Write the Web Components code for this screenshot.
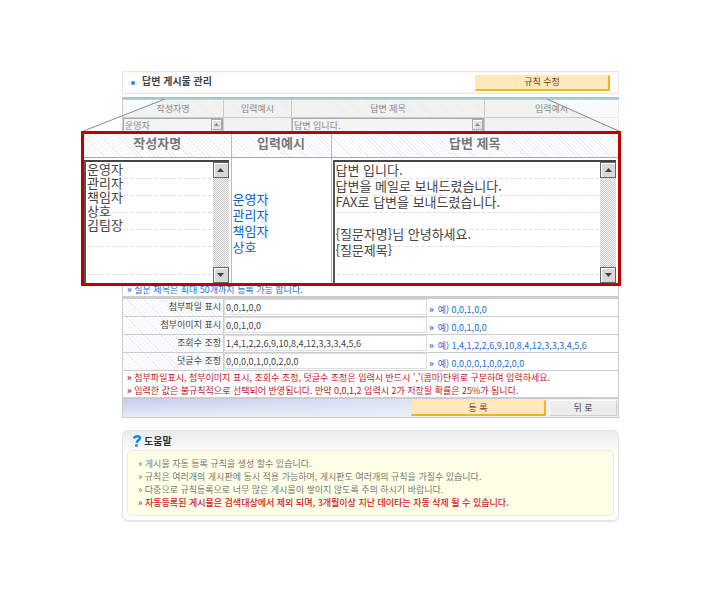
<!DOCTYPE html>
<html lang="ko">
<head>
<meta charset="utf-8">
<title>답변 게시물 관리</title>
<style>
  body {
    margin: 0;
    padding: 71px 104px 78px 122px;
    background: #fff;
    font-family: "Noto Sans CJK KR", "Liberation Sans", sans-serif;
    font-size: 9px;
    line-height: 13px;
    color: #555;
  }
</style>
</head>
<body>
<rule-page></rule-page>

<script>
const HATCH = "repeating-linear-gradient(45deg, #fff 0, #fff 2px, #eaf0f4 2px, #eaf0f4 3px)";

class PageTitle extends HTMLElement {
  constructor() {
    super();
    this.attachShadow({ mode: "open" });
  }

  connectedCallback() {
    this.shadowRoot.innerHTML = `
      <style>
        :host {
          display: flex;
          align-items: center;
          justify-content: space-between;
          height: 21px;
          padding: 0 8px;
          border: 1px solid #e8e8e8;
          background: linear-gradient(#fafafa, #fff 30%, #fff 75%, #f8f8f8);
        }
        h1 {
          display: flex;
          align-items: center;
          gap: 7px;
          margin: 0;
          padding-bottom: 3px;
          font-size: 10px;
          line-height: 18px;
          color: #444;
        }
        h1::before {
          content: "";
          width: 4px;
          height: 4px;
          margin-top: 3px;
          border-radius: 50%;
          background: #1c8fe0;
        }
      </style>
      <h1><slot></slot></h1>
      <slot name="action"></slot>
    `;
  }
}

class ActionButton extends HTMLElement {
  constructor() {
    super();
    this.attachShadow({ mode: "open" });
  }

  connectedCallback() {
    this.shadowRoot.innerHTML = `
      <style>
        :host { display: block; width: 135px; }
        :host([plain]) { width: 68px; }
        button {
          display: block;
          box-sizing: border-box;
          width: 100%;
          height: 16px;
          padding: 0;
          border: 1px solid #ffe6b0;
          border-right: 2px solid #f3b21f;
          border-bottom: 2px solid #f3b21f;
          background: #ffe8bb;
          font: 9px/12px "Noto Sans CJK KR", sans-serif;
          color: #7b3b12;
        }
        :host([plain]) button {
          border-color: #fff #cfcfcf #cfcfcf #fff;
          border-width: 1px;
          background: #ededed;
          color: #444;
        }
      </style>
      <button type="button"><slot></slot></button>
    `;
  }
}

// Multi-line box with the old grey scroll bar at its right
class ScrollBox extends HTMLElement {
  constructor() {
    super();
    this.attachShadow({ mode: "open" });
  }

  connectedCallback() {
    const label = this.getAttribute("label");
    const text = this.getAttribute("text");

    this.shadowRoot.innerHTML = `
      <style>
        :host {
          --bar: 16px;
          display: flex;
          box-sizing: border-box;
          height: 123px;
          border-top: 2px solid #444;
          border-left: 2px solid #555;
          background: #fff;
          font-size: 13px;
          line-height: 16px;
        }
        :host([tight]) { line-height: 14px; }
        :host([small]) {
          --bar: 11px;
          height: 100%;
          border: 1px solid #aaa;
          background: #f4f4f4;
          font-size: 9px;
          line-height: 13px;
        }
        textarea {
          flex: 1;
          min-width: 0;
          box-sizing: border-box;
          padding: 0 1px;
          border: 0;
          resize: none;
          overflow: hidden;
          background:
            repeating-linear-gradient(90deg, #fff 0, #fff 2px, transparent 2px, transparent 6px),
            linear-gradient(#e2e2e2, #e2e2e2) 0 112px / 100% 1px no-repeat,
            repeating-linear-gradient(#fff 0, #fff 16px, #e2e2e2 16px, #e2e2e2 17px) 0 0 / 100% 85px no-repeat;
          font: inherit;
          color: #444;
        }
        :host([small]) textarea { background: none; color: #888; }
        .bar {
          display: flex;
          flex-direction: column;
          justify-content: space-between;
          width: var(--bar);
          background: repeating-conic-gradient(#ccc 0 25%, #f4f4f4 0 50%) 0 0 / 2px 2px;
        }
        button {
          display: flex;
          align-items: center;
          justify-content: center;
          box-sizing: border-box;
          width: var(--bar);
          height: var(--bar);
          padding: 0;
          border: 1px solid #666;
          background: #d8d8d8;
          box-shadow: inset 1px 1px #fff;
        }
        svg { width: 7px; height: 4px; fill: #444; }
        :host([small]) button { border-color: #aaa; background: #e2e2e2; }
        :host([small]) svg { width: 5px; height: 3px; fill: #888; }
      </style>
      <textarea aria-label="${label}">${text}</textarea>
      <div class="bar">
        <button type="button" aria-label="위로"><svg viewBox="0 0 7 4"><path d="M0 4 3.5 0 7 4z"/></svg></button>
        <button type="button" aria-label="아래로"><svg viewBox="0 0 7 4"><path d="M0 0 3.5 4 7 0z"/></svg></button>
      </div>
    `;
  }
}

// The sender / title table, greyed behind the enlarged view
class SourceTable extends HTMLElement {
  constructor() {
    super();
    this.attachShadow({ mode: "open" });
  }

  connectedCallback() {
    this.shadowRoot.innerHTML = `
      <style>
        :host {
          display: block;
          margin-top: 3px;
          border-top: 2px solid #9cc9d2;
        }
        table {
          width: 100%;
          border-collapse: collapse;
          table-layout: fixed;
          background: #f1f1f1;
        }
        th, td {
          box-sizing: border-box;
          padding: 0;
          border: 1px solid #ccc;
        }
        th {
          height: 18px;
          background: repeating-linear-gradient(45deg, #f4f4f4 0, #f4f4f4 2px, #eaecee 2px, #eaecee 3px);
          font-weight: 400;
          color: #888;
        }
        td { height: 165px; }
        td > * { height: 164px; }
        .name { width: 101px; }
        .sample { width: 68px; }
        .subject { width: 193px; }
        p {
          margin: 0;
          padding: 0 4px;
          border: 1px solid #ccc;
          border-top: 0;
          color: #1a6fd0;
        }
      </style>
      <table>
        <tr>
          <th class="name">작성자명</th><th class="sample">입력예시</th>
          <th class="subject">답변 제목</th><th>입력예서</th>
        </tr>
        <tr>
          <td><scroll-box small label="작성자명" text="운영자"></scroll-box></td>
          <td></td>
          <td><scroll-box small label="답변 제목" text="답변 입니다."></scroll-box></td>
          <td></td>
        </tr>
      </table>
      <p><b>»</b> 질문 제목은 최대 50개까지 등록 가능 합니다.</p>
    `;
  }
}

class ZoomPanel extends HTMLElement {
  constructor() {
    super();
    this.attachShadow({ mode: "open" });
  }

  connectedCallback() {
    this.shadowRoot.innerHTML = `
      <style>
        :host {
          display: block;
          border: 3px solid #c00000;
          background: #fff;
          font-size: 13px;
          line-height: 16px;
        }
        table {
          width: 100%;
          border-collapse: collapse;
          table-layout: fixed;
        }
        th, td { padding: 0; border-left: 1px solid #bbb; }
        th:first-child, td:first-child { border-left: 0; }
        th {
          height: 23px;
          padding-bottom: 4px;
          box-sizing: border-box;
          border-bottom: 1px solid #aaa;
          background: ${HATCH};
          color: #777;
        }
        td { padding: 2px 2px 0 1px; }
        td:first-child { padding-left: 0; }
        .name { width: 147px; }
        .sample { width: 100px; }
        p {
          margin: 0;
          padding-top: 3px;
          white-space: pre-line;
          color: #0a62c4;
        }
      </style>
      <table>
        <tr><th class="name">작성자명</th><th class="sample">입력예시</th><th>답변 제목</th></tr>
        <tr>
          <td><scroll-box tight label="작성자명" text="운영자&#10;관리자&#10;책임자&#10;상호&#10;김팀장"></scroll-box></td>
          <td><p>운영자&#10;관리자&#10;책임자&#10;상호</p></td>
          <td><scroll-box label="답변 제목" text="답변 입니다.&#10;답변을 메일로 보내드렸습니다.&#10;FAX로 답변을 보내드렸습니다.&#10;&#10;{질문자명}님 안녕하세요.&#10;{질문제목}"></scroll-box></td>
        </tr>
      </table>
    `;
  }
}

class RuleField extends HTMLElement {
  constructor() {
    super();
    this.attachShadow({ mode: "open" });
  }

  connectedCallback() {
    const label = this.getAttribute("label");
    const value = this.getAttribute("value");

    this.shadowRoot.innerHTML = `
      <style>
        :host {
          display: grid;
          grid-template-columns: 101px 203px 1fr;
          height: 17px;
          border-bottom: 1px solid #ccc;
        }
        label {
          padding-right: 2px;
          border-right: 1px solid #ccc;
          background: ${HATCH};
          line-height: 16px;
          text-align: right;
          color: #444;
        }
        input {
          box-sizing: border-box;
          width: 100%;
          height: 16px;
          padding: 0 1px;
          border: 1px solid #ddd;
          background: #fff;
          font: inherit;
          color: #444;
        }
        span {
          padding: 4px 0 0 2px;
          color: #1a6fd0;
        }
        b { margin-right: 4px; }
      </style>
      <label for="value">${label}</label>
      <input id="value" type="text" value="${value}">
      <span><b>»</b>예) ${value}</span>
    `;
  }
}

class HelpBox extends HTMLElement {
  constructor() {
    super();
    this.attachShadow({ mode: "open" });
  }

  connectedCallback() {
    this.shadowRoot.innerHTML = `
      <style>
        :host {
          display: block;
          margin-top: 12px;
          padding: 0 4px 4px;
          border: 1px solid #e2e2e2;
          border-bottom: 2px solid #e6e6e6;
          border-radius: 6px;
          background: linear-gradient(#ebebeb, #fff 24px);
        }
        h2 {
          display: flex;
          align-items: center;
          gap: 3px;
          height: 19px;
          margin: 0;
          padding-left: 6px;
          font-size: 10px;
          line-height: 19px;
          color: #333;
        }
        svg { width: 8px; height: 12px; }
        div {
          padding: 6px 10px;
          border: 1px solid #ececdc;
          border-radius: 5px;
          background: #ffffe8;
          color: #777;
        }
      </style>
      <h2>
        <svg viewBox="0 0 8 12" aria-hidden="true">
          <path d="M1 3.400C1.400 1.600 3 1.200 4.600 1.200c1.700 0 2.500.8 2.200 2.200C6.400 5.300 4 5.300 3.700 7.800" fill="none" stroke="#1488e8" stroke-width="2.400"/>
          <path d="M2.300 9.200h2.600l-.4 2.600H1.900z" fill="#1488e8"/>
        </svg>
        도움말
      </h2>
      <div><slot></slot></div>
    `;
  }
}

class RulePage extends HTMLElement {
  constructor() {
    super();
    this.attachShadow({ mode: "open" });
  }

  connectedCallback() {
    this.shadowRoot.innerHTML = `
      <style>
        :host { display: block; position: relative; }
        .lead {
          position: absolute;
          top: 28px;
          left: -41px;
          right: -2px;
          display: flex;
          justify-content: space-between;
        }
        .lead svg { width: 84px; height: 33px; }
        .lead svg + svg { width: 74px; }
        .lead line { stroke: #888; }
        .lead path { fill: #fff; fill-opacity: .6; }
        zoom-panel {
          position: absolute;
          top: 60px;
          left: -41px;
          right: -2px;
        }
        form {
          margin: 0;
          border: 1px solid #ccc;
          border-top-width: 2px;
        }
        p { margin: 0; }
        .notes {
          padding: 0 4px;
          color: #c8141e;
        }
        .buttons {
          display: flex;
          justify-content: flex-end;
          gap: 3px;
          padding: 1px;
          border-top: 2px solid #ccc;
          background: linear-gradient(90deg, transparent, #eef1fa), linear-gradient(#c3cdea, #e9edf8);
        }
        .warn { font-weight: 500; color: #d02020; }
      </style>
      <page-title>답변 게시물 관리<action-button slot="action">규칙 수정</action-button></page-title>
      <source-table></source-table>
      <form>
        <rule-field label="첨부파일 표시" value="0,0,1,0,0"></rule-field>
        <rule-field label="첨부이미지 표시" value="0,0,1,0,0"></rule-field>
        <rule-field label="조회수 조정" value="1,4,1,2,2,6,9,10,8,4,12,3,3,3,4,5,6"></rule-field>
        <rule-field label="덧글수 조정" value="0,0,0,0,1,0,0,2,0,0"></rule-field>
        <div class="notes">
          <p><b>»</b> 첨부파일표시, 첨부이미지 표시, 조회수 조정, 덧글수 조정은 입력시 반드시 ','(콤마)단위로 구분하여 입력하세요.</p>
          <p><b>»</b> 입력한 값은 불규칙적으로 선택되어 반영됩니다. 만약 0,0,1,2 입력시 2가 저장될 확률은 25%가 됩니다.</p>
        </div>
        <div class="buttons">
          <action-button>등 록</action-button>
          <action-button plain>뒤 로</action-button>
        </div>
      </form>
      <help-box>
        <p>» 게시물 자동 등록 규칙을 생성 할수 있습니다.</p>
        <p>» 규칙은 여러개의 게시판에 동시 적용 가능하며, 게시판도 여러개의 규칙을 가질수 있습니다.</p>
        <p>» 다중으로 규칙등록으로 너무 많은 게시물이 쌓이지 않도록 주의 하시기 바랍니다.</p>
        <p class="warn">» 자동등록된 게시물은 검색대상에서 제외 되며, 3개월이상 지난 데이타는 자동 삭제 될 수 있습니다.</p>
      </help-box>
      <div class="lead">
        <svg viewBox="0 0 84 33" aria-hidden="true"><path d="M42 1H82L42 17z"/><line x1="0" y1="33" x2="84" y2="0"/></svg>
        <svg viewBox="0 0 74 33" aria-hidden="true"><path d="M2 1H72V32z"/><line x1="0" y1="0" x2="74" y2="33"/></svg>
      </div>
      <zoom-panel></zoom-panel>
    `;
  }
}

customElements.define("page-title", PageTitle);
customElements.define("action-button", ActionButton);
customElements.define("scroll-box", ScrollBox);
customElements.define("source-table", SourceTable);
customElements.define("zoom-panel", ZoomPanel);
customElements.define("rule-field", RuleField);
customElements.define("help-box", HelpBox);
customElements.define("rule-page", RulePage);
</script>
</body>
</html>
